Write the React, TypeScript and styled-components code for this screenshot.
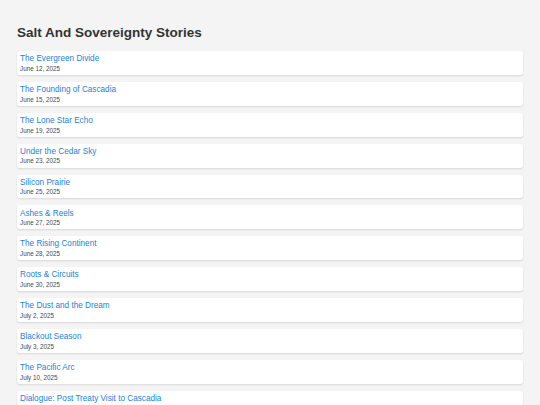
import React from "react";
import styled, { createGlobalStyle } from "styled-components";

const stories = [
  { title: "The Evergreen Divide", date: "June 12, 2025" },
  { title: "The Founding of Cascadia", date: "June 15, 2025" },
  { title: "The Lone Star Echo", date: "June 19, 2025" },
  { title: "Under the Cedar Sky", date: "June 23, 2025" },
  { title: "Silicon Prairie", date: "June 25, 2025" },
  { title: "Ashes & Reels", date: "June 27, 2025" },
  { title: "The Rising Continent", date: "June 28, 2025" },
  { title: "Roots & Circuits", date: "June 30, 2025" },
  { title: "The Dust and the Dream", date: "July 2, 2025" },
  { title: "Blackout Season", date: "July 3, 2025" },
  { title: "The Pacific Arc", date: "July 10, 2025" },
  { title: "Dialogue: Post Treaty Visit to Cascadia", date: "July 12, 2025" },
];

const App: React.FC = () => {
  return (
    <>
      <GlobalStyle />
      <Page>
        <Heading>Salt And Sovereignty Stories</Heading>
        <StoryList>
          {stories.map((s) => (
            <StoryCard key={s.title}>
              <StoryLink href="#">{s.title}</StoryLink>
              <StoryDate>{s.date}</StoryDate>
            </StoryCard>
          ))}
        </StoryList>
      </Page>
    </>
  );
};

const GlobalStyle = createGlobalStyle`
  html, body {
    margin: 0;
    padding: 0;
    background: #f4f4f4;
    font-family: "Liberation Sans", Arial, sans-serif;
    overflow: hidden;
  }
`;

const Page = styled.main`
  padding: 24px 17px 0;
`;

const Heading = styled.h1`
  margin: 0 0 9px;
  font-size: 13.5px;
  line-height: 18px;
  font-weight: 700;
  color: #333333;
`;

const StoryList = styled.ul`
  list-style: none;
  margin: 0;
  padding: 0;
  display: flex;
  flex-direction: column;
  gap: 7px;
`;

const StoryCard = styled.li`
  background: #ffffff;
  border-radius: 3px;
  padding: 3.2px 3px 2.1px;
  box-shadow: 0 1px 2px rgba(0, 0, 0, 0.12);
  display: flex;
  flex-direction: column;
`;

const StoryLink = styled.a`
  font-size: 8.2px;
  line-height: 10.6px;
  color: #1e7fd8;
  text-decoration: none;
`;

const StoryDate = styled.span`
  font-size: 6.3px;
  line-height: 8px;
  color: #4a4a4a;
`;

export default App;
